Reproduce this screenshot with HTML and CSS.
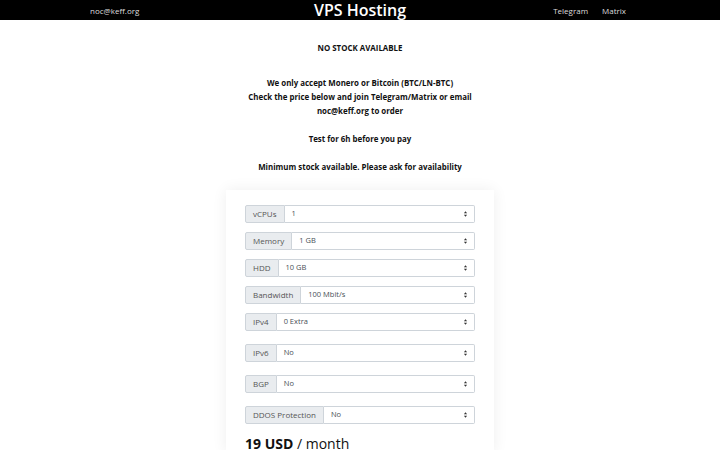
FILE: index.html
```html
<!DOCTYPE html>
<html lang="en">
<head>
<meta charset="utf-8">
<title>VPS Hosting</title>
<link rel="stylesheet" href="styles.css">
</head>
<body>
<header class="topbar">
  <div class="topbar-inner">
    <a class="top-link contact" href="#">noc@keff.org</a>
    <h1 class="brand">VPS Hosting</h1>
    <nav class="top-nav">
      <a class="top-link" href="#">Telegram</a>
      <a class="top-link" href="#">Matrix</a>
    </nav>
  </div>
</header>

<main class="content">
  <p class="notice stock">NO STOCK AVAILABLE</p>
  <p class="notice">We only accept Monero or Bitcoin (BTC/LN-BTC)<br>Check the price below and join Telegram/Matrix or email<br>noc@keff.org to order</p>
  <p class="notice">Test for 6h before you pay</p>
  <p class="notice">Minimum stock available. Please ask for availability</p>

  <section class="card">
    <div class="group-list">
      <div class="field"><span class="addon">vCPUs</span><div class="select"><span>1</span><svg class="caret" viewBox="0 0 6 10"><path d="M1 4 3 1.5 5 4Z M1 6 3 8.5 5 6Z"/></svg></div></div>
      <div class="field"><span class="addon">Memory</span><div class="select"><span>1 GB</span><svg class="caret" viewBox="0 0 6 10"><path d="M1 4 3 1.5 5 4Z M1 6 3 8.5 5 6Z"/></svg></div></div>
      <div class="field"><span class="addon">HDD</span><div class="select"><span>10 GB</span><svg class="caret" viewBox="0 0 6 10"><path d="M1 4 3 1.5 5 4Z M1 6 3 8.5 5 6Z"/></svg></div></div>
      <div class="field"><span class="addon">Bandwidth</span><div class="select"><span>100 Mbit/s</span><svg class="caret" viewBox="0 0 6 10"><path d="M1 4 3 1.5 5 4Z M1 6 3 8.5 5 6Z"/></svg></div></div>
      <div class="field"><span class="addon">IPv4</span><div class="select"><span>0 Extra</span><svg class="caret" viewBox="0 0 6 10"><path d="M1 4 3 1.5 5 4Z M1 6 3 8.5 5 6Z"/></svg></div></div>
    </div>
    <div class="group-list loose">
      <div class="field"><span class="addon">IPv6</span><div class="select"><span>No</span><svg class="caret" viewBox="0 0 6 10"><path d="M1 4 3 1.5 5 4Z M1 6 3 8.5 5 6Z"/></svg></div></div>
      <div class="field"><span class="addon">BGP</span><div class="select"><span>No</span><svg class="caret" viewBox="0 0 6 10"><path d="M1 4 3 1.5 5 4Z M1 6 3 8.5 5 6Z"/></svg></div></div>
      <div class="field"><span class="addon">DDOS Protection</span><div class="select"><span>No</span><svg class="caret" viewBox="0 0 6 10"><path d="M1 4 3 1.5 5 4Z M1 6 3 8.5 5 6Z"/></svg></div></div>
    </div>
    <p class="price"><strong>19 USD</strong> / month</p>
  </section>
</main>
</body>
</html>
```

FILE: styles.css
```css
* { box-sizing: border-box; }

html, body {
  margin: 0;
  padding: 0;
  background: #fff;
  font-family: "Open Sans", "DejaVu Sans", sans-serif;
  color: #111;
}

/* top bar */
.topbar {
  background: #000;
  height: 20px;
}
.topbar-inner {
  width: 540px;
  margin: 0 auto;
  height: 20px;
  display: grid;
  grid-template-columns: 1fr auto 1fr;
  align-items: center;
}
.top-link {
  color: #ddd;
  text-decoration: none;
  font-size: 8px;
}
.contact { justify-self: start; }
.brand {
  margin: 0;
  color: #fff;
  font-size: 16px;
  font-weight: 600;
  line-height: 20px;
}
.top-nav {
  justify-self: end;
  display: flex;
  gap: 14px;
  padding-right: 4px;
}

/* notices */
.content {
  display: flex;
  flex-direction: column;
  align-items: center;
  padding-top: 21px;
}
.notice {
  margin: 0 0 14px;
  font-size: 7.9px;
  font-weight: 700;
  line-height: 14px;
  text-align: center;
  color: #111;
}
.notice.stock { margin-bottom: 21px; }

/* configurator card */
.card {
  width: 268px;
  margin-top: 2px;
  padding: 15px 19px 0;
  background: #fff;
  box-shadow: 0 0 14px rgba(0, 0, 0, 0.07);
  display: flex;
  flex-direction: column;
}
.group-list {
  display: flex;
  flex-direction: column;
  gap: 9px;
}
.group-list.loose {
  margin-top: 13px;
  gap: 13px;
}
.field {
  display: flex;
  height: 18px;
  font-size: 8px;
  line-height: 1;
  color: #555;
}
.addon {
  display: flex;
  align-items: center;
  padding: 0 7px 1px;
  background: #e9ecef;
  border: 1px solid #ced4da;
  border-radius: 2px 0 0 2px;
  white-space: nowrap;
}
.select {
  flex: 1;
  position: relative;
  display: flex;
  align-items: center;
  padding: 0 7px;
  border: 1px solid #ced4da;
  border-left: 0;
  border-radius: 0 2px 2px 0;
  color: #495057;
  font-size: 7.5px;
}
.caret {
  position: absolute;
  right: 6px;
  top: 4px;
  width: 5px;
  height: 8px;
  fill: #333;
}
.price {
  margin: 11px 0 0;
  font-size: 14px;
  line-height: 18px;
  color: #111;
}
.price strong { font-weight: 700; }
```
